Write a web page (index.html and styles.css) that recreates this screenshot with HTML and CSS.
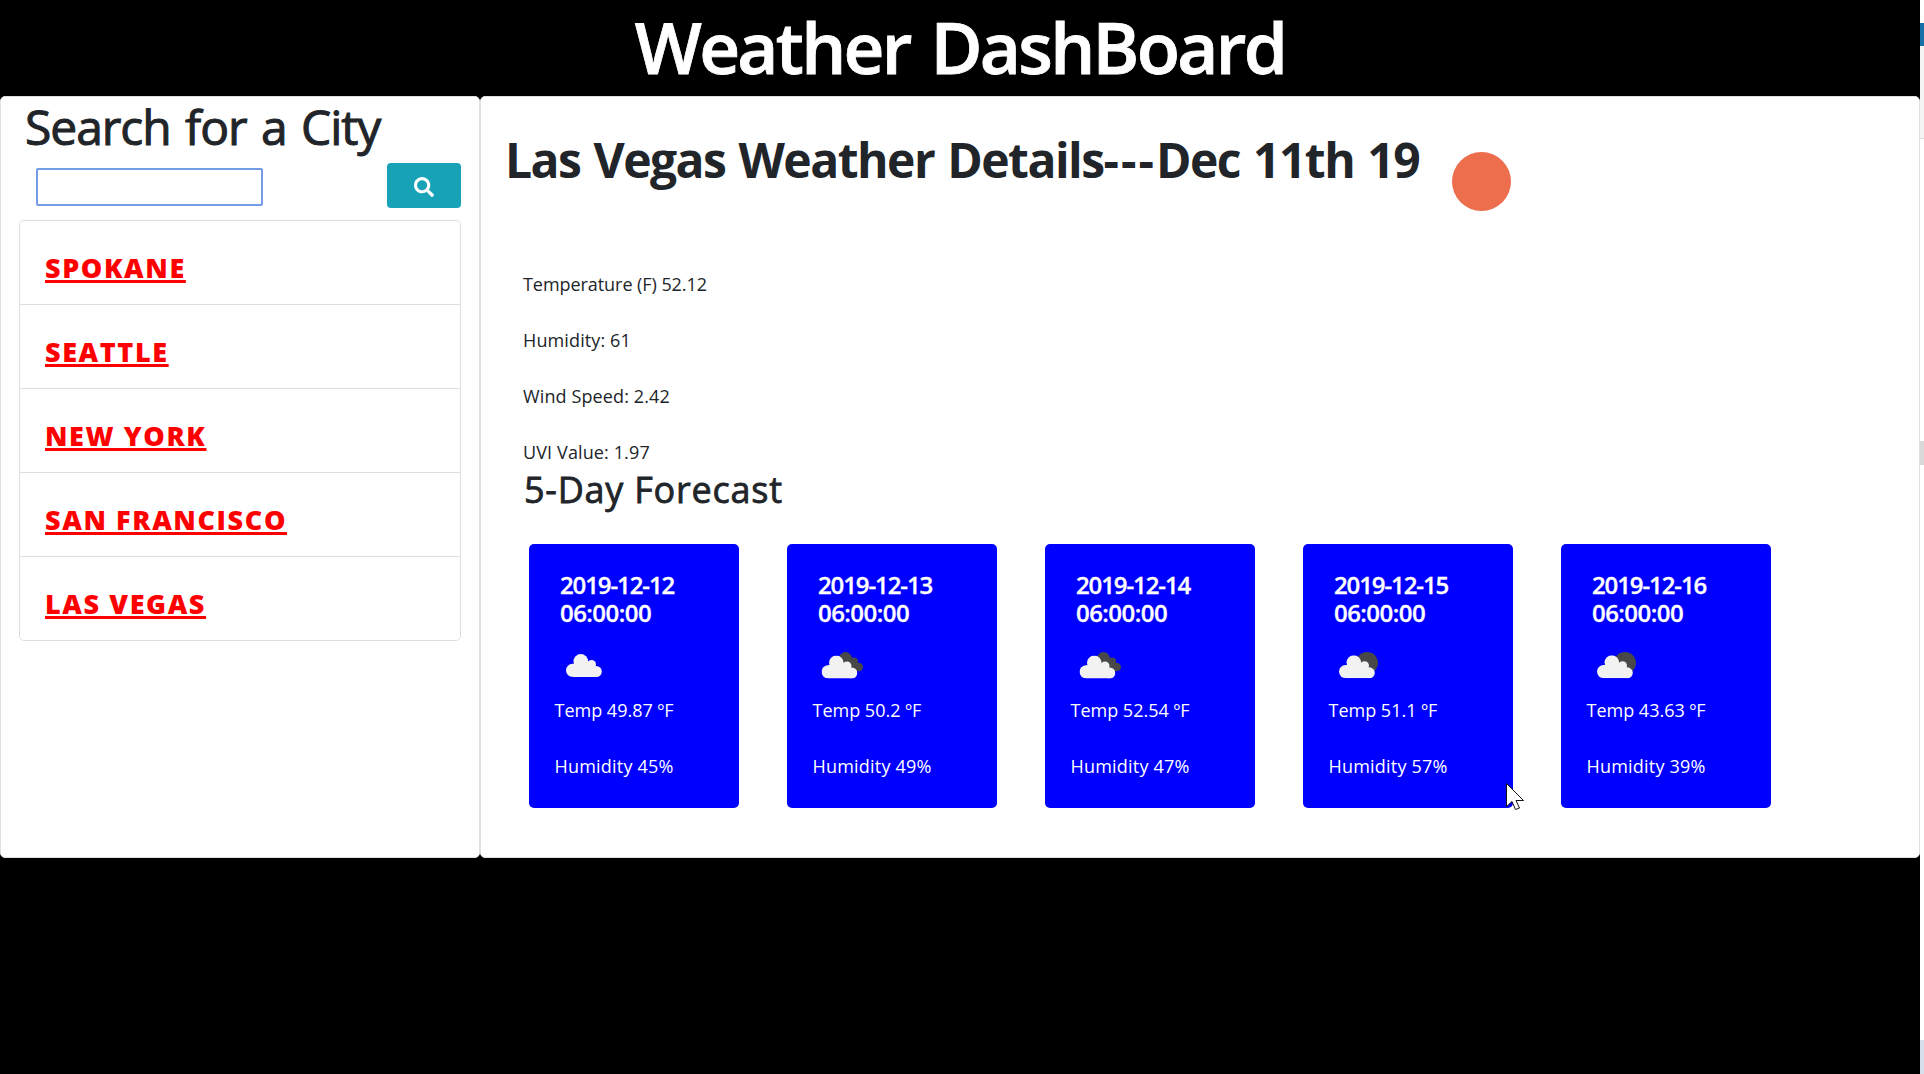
FILE: index.html
```html
<!DOCTYPE html>
<html lang="en">
<head>
<meta charset="utf-8">
<title>Weather DashBoard</title>
<link rel="stylesheet" href="styles.css">
</head>
<body>
<svg class="defs" aria-hidden="true">
  <symbol id="cloud" viewBox="0 0 36 23"><g fill="#f2f2f2"><circle cx="6.500" cy="16.300" r="6.500"/><circle cx="14.800" cy="7.300" r="7.300"/><circle cx="25.500" cy="10.500" r="4.500"/><circle cx="30.300" cy="17.500" r="5.500"/><path d="M6.500 9.800h2L14 7l9 1 4 5 3.300 4.500V23H6.500z"/></g></symbol>
  <symbol id="few" viewBox="0 0 50 50"><use href="#cloud" x="7" y="14" width="36" height="23"/></symbol>
  <symbol id="broken" viewBox="0 0 50 50"><g fill="#484848"><circle cx="28.500" cy="18.500" r="6.500"/><circle cx="37" cy="21.500" r="4"/><circle cx="41.700" cy="27" r="4.300"/><path d="M28 18h8l4 6 2 7H28z"/></g><use href="#cloud" x="4.500" y="15.500" width="36" height="23"/></symbol>
  <symbol id="night" viewBox="0 0 50 50"><circle cx="34" cy="23" r="11" fill="#484848"/><use href="#cloud" x="6" y="15.300" width="36" height="23"/></symbol>
</svg>
<div class="page">
  <div class="app">
    <header class="header"><h1 class="title">Weather DashBoard</h1></header>
    <main class="columns">
      <section class="panel search">
        <h2 class="search-title">Search for a City</h2>
        <div class="search-row">
          <input class="search-input" type="text" aria-label="City">
          <button class="search-button" aria-label="Search"><svg width="20" height="20" viewBox="0 0 512 512"><path fill="#fff" d="M505 442.700L405.300 343c-4.500-4.500-10.600-7-17-7H372c27.600-35.300 44-79.700 44-128C416 93.100 322.900 0 208 0S0 93.100 0 208s93.100 208 208 208c48.300 0 92.700-16.400 128-44v16.300c0 6.400 2.500 12.500 7 17l99.700 99.700c9.400 9.400 24.600 9.400 33.900 0l28.300-28.300c9.400-9.400 9.400-24.600.1-34zM208 336c-70.700 0-128-57.200-128-128 0-70.700 57.200-128 128-128 70.700 0 128 57.200 128 128 0 70.700-57.200 128-128 128z"/></svg></button>
        </div>
        <ul class="cities">
          <li>SPOKANE</li>
          <li>SEATTLE</li>
          <li>NEW YORK</li>
          <li>SAN FRANCISCO</li>
          <li>LAS VEGAS</li>
        </ul>
      </section>
      <section class="panel details">
        <div class="details-head"><h2 class="details-title">Las Vegas Weather Details<span class="dashes">---</span>Dec 11th 19</h2><i class="sun"></i></div>
        <div class="stats">
          <p class="temperature">Temperature (F) 52.12</p>
          <p>Humidity: 61</p>
          <p>Wind Speed: 2.42</p>
          <p>UVI Value: 1.97</p>
        </div>
        <h3 class="forecast-title">5-Day Forecast</h3>
        <div class="cards">
          <article class="card"><h4><span class="date">2019-12-12</span><br>06:00:00</h4><svg class="icon"><use href="#few"/></svg><p>Temp 49.87 ºF</p><p class="humidity">Humidity 45%</p></article>
          <article class="card"><h4><span class="date">2019-12-13</span><br>06:00:00</h4><svg class="icon"><use href="#broken"/></svg><p>Temp 50.2 ºF</p><p class="humidity">Humidity 49%</p></article>
          <article class="card"><h4><span class="date">2019-12-14</span><br>06:00:00</h4><svg class="icon"><use href="#broken"/></svg><p>Temp 52.54 ºF</p><p class="humidity">Humidity 47%</p></article>
          <article class="card"><h4><span class="date">2019-12-15</span><br>06:00:00</h4><svg class="icon"><use href="#night"/></svg><p>Temp 51.1 ºF</p><p class="humidity">Humidity 57%</p></article>
          <article class="card"><h4><span class="date">2019-12-16</span><br>06:00:00</h4><svg class="icon"><use href="#night"/></svg><p>Temp 43.63 ºF</p><p class="humidity">Humidity 39%</p></article>
        </div>
      </section>
    </main>
  </div>
  <aside class="edge"></aside>
</div>
<svg class="cursor" width="20" height="28" viewBox="0 0 20 28"><path d="M.5.500V23.500L6 18.500l3.500 8 4-1.500-3.500-7.500h7.500z" fill="#fff" stroke="#111"/></svg>
</body>
</html>
```
FILE: styles.css
```css
* { box-sizing: border-box; }
body { margin: 0; background: #000; color: #212529; font-family: "Open Sans", "Noto Sans", sans-serif; font-size: 18px; line-height: 28px; overflow: hidden; }
h1, h2, h3, h4, p, ul { margin: 0; padding: 0; }
.defs { display: none; }
.page { display: flex; height: 1074px; }
.app { width: 1920px; flex: none; }
.header { height: 96px; text-align: center; color: #fff; }
.title { font-size: 71px; line-height: 94px; font-weight: 600; letter-spacing: -2.7px; word-spacing: 5px; -webkit-text-stroke: 0.8px #fff; }
.columns { display: flex; height: 762px; }
.panel { background: #fff; border: 1px solid #dfdfdf; border-radius: 5px; }
.search { width: 480px; padding: 1px 18px 0; }
.details { width: 1440px; padding: 34px 43px 0 48px; }
.search-title { padding-left: 6px; font-size: 48px; line-height: 58px; font-weight: 400; letter-spacing: -1.05px; word-spacing: 3px; -webkit-text-stroke: 1px #212529; }
.search-row { display: flex; justify-content: space-between; align-items: flex-start; height: 64px; padding: 7px 0 0 17px; }
.search-input { width: 227px; height: 38px; margin-top: 5px; border: 2px solid #739be6; border-radius: 2px; outline: 0; }
.search-button { display: flex; align-items: center; justify-content: center; width: 74px; height: 45px; padding: 2px 0 0; border: 0; border-radius: 4px; background: #17a2b8; }
.cities { list-style: none; border: 1px solid #dfdfdf; border-radius: 5px; }
.cities li { height: 84px; padding: 30px 0 0 25px; font-size: 27px; line-height: 34px; font-weight: 800; letter-spacing: 1.6px; color: red; text-decoration: underline; text-decoration-thickness: 3px; text-underline-offset: 2px; border-bottom: 1px solid #dfdfdf; }
.cities li:last-child { height: 83px; border-bottom: 0; }
.details-head { display: flex; height: 139px; margin-left: -24px; }
.details-title { width: 947px; font-size: 48px; line-height: 58px; font-weight: 700; letter-spacing: -1.5px; word-spacing: 2px; white-space: nowrap; }
.dashes { letter-spacing: 2px; }
.sun { width: 59px; height: 59px; margin-top: 21px; border-radius: 50%; background: #ec6e4c; }
.stats { margin-left: -6px; letter-spacing: 0.12px; }
.stats .temperature { letter-spacing: -0.06px; }
.stats p { height: 56px; }
.stats p:last-child { height: 28px; }
.forecast-title { margin-left: -5px; padding-top: 1px; font-size: 36px; line-height: 46px; font-weight: 400; letter-spacing: 0.76px; -webkit-text-stroke: 0.8px #212529; }
.cards { display: flex; gap: 48px; margin-top: 31px; }
.card { width: 210px; height: 264px; padding: 27px 26px 0; border-radius: 5px; background: #00f; color: #fff; }
.card h4 { padding-left: 5px; font-size: 24px; line-height: 28px; font-weight: 600; letter-spacing: -0.55px; -webkit-text-stroke: 0.3px #fff; }
.card .date { letter-spacing: -1.1px; }
.icon { display: block; width: 50px; height: 50px; margin: 13px 0 6px 4px; }
.card p { height: 56px; margin-left: -0.5px; }
.card .humidity { letter-spacing: 0.2px; }
.edge { width: 4px; background: linear-gradient(#fff 0 23px, #1770a6 23px 46px, #f3f3f3 46px 138px, #ddd 138px 139px, #fff 139px 441px, #d9d9d9 441px 465px, #fff 465px 1040px, #d5dfeb 1040px); }
.cursor { position: absolute; left: 1506px; top: 783px; }
```
